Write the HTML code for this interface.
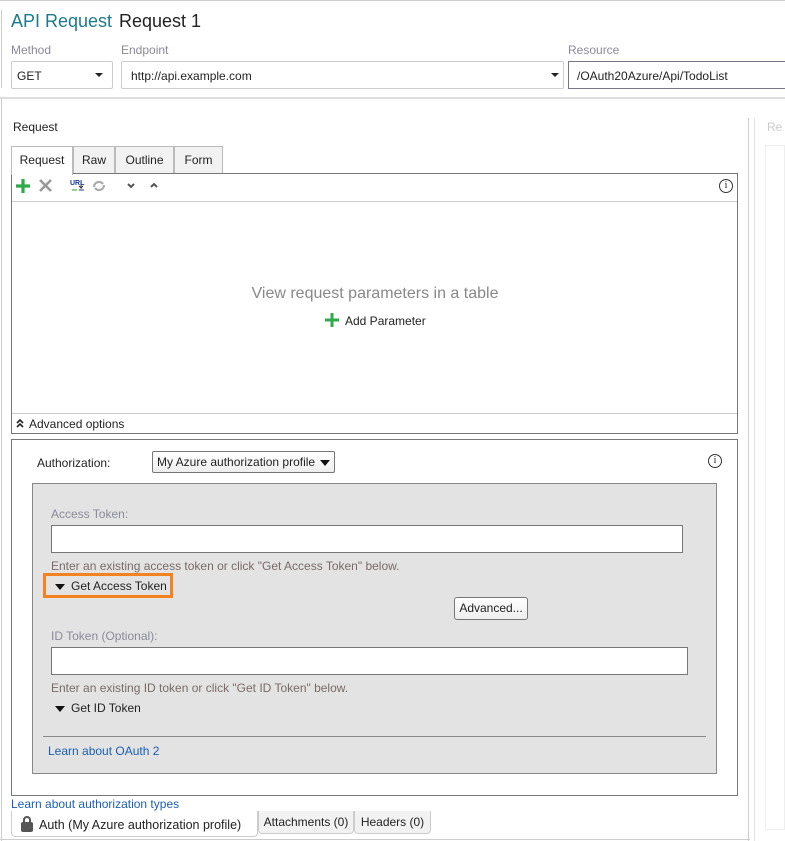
<!DOCTYPE html>
<html><head><meta charset="utf-8"><style>
*{margin:0;padding:0;box-sizing:border-box}
body{width:785px;height:841px;overflow:hidden;background:#fff;font-family:"Liberation Sans",sans-serif;font-size:12px;color:#222;position:relative}
.a{position:absolute}
.lbl{color:#8a8a9a;font-size:12px}
.box{border:1px solid #ccc;background:#fff}
.tab{position:absolute;top:146px;height:28px;border:1px solid #bbb;border-bottom:none;background:#f2f2f2;text-align:center;line-height:26px;font-size:12px}
.link{color:#1a5fb4}
.tri{display:inline-block;width:0;height:0;border-left:5px solid transparent;border-right:5px solid transparent;border-top:6px solid #111;vertical-align:middle}
</style></head><body>
<div class="a" style="left:0;top:0;width:785px;height:1px;background:#ccc"></div>
<div class="a" style="left:1px;top:10px;width:1px;height:78px;background:#ccc"></div>
<div class="a" style="left:11px;top:11px;font-size:18px;color:#1b7a8c">API Request</div>
<div class="a" style="left:119px;top:11px;font-size:18px;color:#222">Request 1</div>
<div class="a lbl" style="left:11px;top:43px">Method</div>
<div class="a lbl" style="left:121px;top:43px">Endpoint</div>
<div class="a lbl" style="left:568px;top:43px">Resource</div>
<div class="a box" style="left:11px;top:61px;width:102px;height:28px;border-radius:2px"><span class="a" style="left:5px;top:7px">GET</span><span class="a" style="left:83px;top:11px;border-left:4px solid transparent;border-right:4px solid transparent;border-top:4px solid #222"></span></div>
<div class="a box" style="left:121px;top:61px;width:443px;height:28px;border-radius:2px"><span class="a" style="left:9px;top:7px">http://api.example.com</span><span class="a" style="left:429px;top:11px;border-left:4px solid transparent;border-right:4px solid transparent;border-top:4px solid #222"></span></div>
<div class="a" style="left:568px;top:61px;width:217px;height:28px;border:1px solid #778;border-right:none;background:#fff"><span class="a" style="left:8px;top:7px">/OAuth20Azure/Api/TodoList</span></div>
<div class="a" style="left:0;top:97px;width:785px;height:2px;background:#ddd"></div>
<div class="a" style="left:1px;top:99px;width:1px;height:742px;background:#ccc"></div>
<div class="a" style="left:0;top:839px;width:750px;height:1px;background:#ccc"></div>
<div class="a" style="left:748px;top:118px;width:1px;height:723px;background:#ccc"></div>
<div class="a" style="left:754px;top:118px;width:1px;height:723px;background:#e3e3e3"></div>
<div class="a" style="left:767px;top:120px;color:#ccc">Re</div>
<div class="a" style="left:765px;top:145px;width:20px;height:685px;border:1px solid #eee"></div>
<div class="a" style="left:13px;top:120px">Request</div>
<div class="tab" style="left:11px;width:62px;background:#fff;height:29px;z-index:2">Request</div>
<div class="tab" style="left:73px;width:42px">Raw</div>
<div class="tab" style="left:115px;width:59px">Outline</div>
<div class="tab" style="left:174px;width:49px">Form</div>
<div class="a" style="left:11px;top:173px;width:727px;height:261px;border:1px solid #777"></div>
<div class="a" style="left:12px;top:201px;width:725px;height:1px;background:#ccc"></div>
<div class="a" style="left:12px;top:413px;width:725px;height:1px;background:#ccc"></div>
<svg class="a" style="left:14px;top:178px" width="150" height="16" viewBox="0 0 150 16">
<path d="M9 1v14M2 8h14" stroke="#2eaa4a" stroke-width="3.2"/>
<path d="M26 2l11 11M37 2l-11 11" stroke="#999" stroke-width="2.6"/>
<text x="56" y="7" font-size="7" font-weight="bold" fill="#1a3a9a" font-family="Liberation Sans">URL</text>
<path d="M67 4v6l-2-2M67 10l2-2" stroke="#333" stroke-width="1" fill="none"/>
<path d="M58 12h5M65 12h5" stroke="#2a2" stroke-width="1"/><path d="M65 12h5" stroke="#1a3a9a"/>
<path d="M80 9a5 5 0 0 1 9-3M90 7a5 5 0 0 1-9 3" stroke="#aaa" stroke-width="2.2" fill="none"/>
<path d="M114 6l3 3 3-3" stroke="#555" stroke-width="2" fill="none"/>
<path d="M137 9l3-3 3 3" stroke="#555" stroke-width="2" fill="none"/>
</svg>
<div class="a" style="left:719px;top:179px;width:14px;height:14px;border:1.3px solid #333;border-radius:50%;text-align:center;font-size:10px;line-height:12px;font-family:'Liberation Serif',serif">i</div>
<div class="a" style="left:0;width:750px;text-align:center;top:285px;font-size:16px;color:#888">View request parameters in a table</div>
<svg class="a" style="left:325px;top:313px" width="14" height="14"><path d="M7 0v14M0 7h14" stroke="#2eaa4a" stroke-width="3"/></svg>
<div class="a" style="left:345px;top:314px">Add Parameter</div>
<svg class="a" style="left:15px;top:418px" width="10" height="10"><path d="M2 5l3-3 3 3M2 9l3-3 3 3" stroke="#222" stroke-width="1.6" fill="none"/></svg>
<div class="a" style="left:29px;top:417px">Advanced options</div>
<div class="a" style="left:11px;top:439px;width:727px;height:357px;border:1px solid #777"></div>
<div class="a" style="left:37px;top:456px">Authorization:</div>
<div class="a" style="left:152px;top:451px;width:183px;height:22px;border:1px solid #777;border-radius:2px;background:linear-gradient(#fff,#eee)"><span class="a" style="left:4px;top:3px">My Azure authorization profile</span><span class="a" style="left:167px;top:8px;border-left:5px solid transparent;border-right:5px solid transparent;border-top:6px solid #111"></span></div>
<div class="a" style="left:708px;top:454px;width:14px;height:14px;border:1.3px solid #333;border-radius:50%;text-align:center;font-size:10px;line-height:12px;font-family:'Liberation Serif',serif">i</div>
<div class="a" style="left:32px;top:483px;width:685px;height:291px;border:1px solid #888;background:#e3e3e3"></div>
<div class="a" style="left:51px;top:507px;color:#8a8a9a">Access Token:</div>
<div class="a" style="left:51px;top:525px;width:632px;height:28px;border:1px solid #777;background:#fff"></div>
<div class="a" style="left:51px;top:559px;color:#7a6a6a">Enter an existing access token or click "Get Access Token" below.</div>
<div class="a" style="left:43px;top:573px;width:130px;height:25px;border:3px solid #f58220"></div>
<div class="a" style="left:55px;top:579px"><span class="tri"></span></div>
<div class="a" style="left:71px;top:579px">Get Access Token</div>
<div class="a" style="left:454px;top:597px;width:74px;height:23px;border:1px solid #777;border-radius:3px;background:linear-gradient(#fff,#eee);text-align:center;line-height:21px">Advanced...</div>
<div class="a" style="left:51px;top:629px;color:#8a8a9a">ID Token (Optional):</div>
<div class="a" style="left:51px;top:647px;width:637px;height:28px;border:1px solid #777;background:#fff"></div>
<div class="a" style="left:51px;top:681px;color:#7a6a6a">Enter an existing ID token or click "Get ID Token" below.</div>
<div class="a" style="left:55px;top:701px"><span class="tri"></span></div>
<div class="a" style="left:71px;top:701px">Get ID Token</div>
<div class="a" style="left:43px;top:736px;width:663px;height:1px;background:#888"></div>
<div class="a link" style="left:48px;top:744px">Learn about OAuth 2</div>
<div class="a link" style="left:11px;top:797px">Learn about authorization types</div>
<div class="a" style="left:11px;top:811px;width:247px;height:26px;border:1px solid #ccc;border-top:none;border-radius:0 0 4px 4px;background:#fff"><span class="a" style="left:9px;top:11px;width:12px;height:10px;background:#555;border-radius:2px"></span><span class="a" style="left:11px;top:5px;width:8px;height:8px;border:2px solid #555;border-bottom:none;border-radius:4px 4px 0 0"></span><span class="a" style="left:27px;top:7px;font-size:12.5px">Auth (My Azure authorization profile)</span></div>
<div class="a" style="left:258px;top:811px;width:96px;height:23px;border:1px solid #ccc;border-top:none;border-radius:0 0 4px 4px;background:#f2f2f2;text-align:center;line-height:22px">Attachments (0)</div>
<div class="a" style="left:354px;top:811px;width:77px;height:23px;border:1px solid #ccc;border-top:none;border-radius:0 0 4px 4px;background:#f2f2f2;text-align:center;line-height:22px">Headers (0)</div>
</body></html>
